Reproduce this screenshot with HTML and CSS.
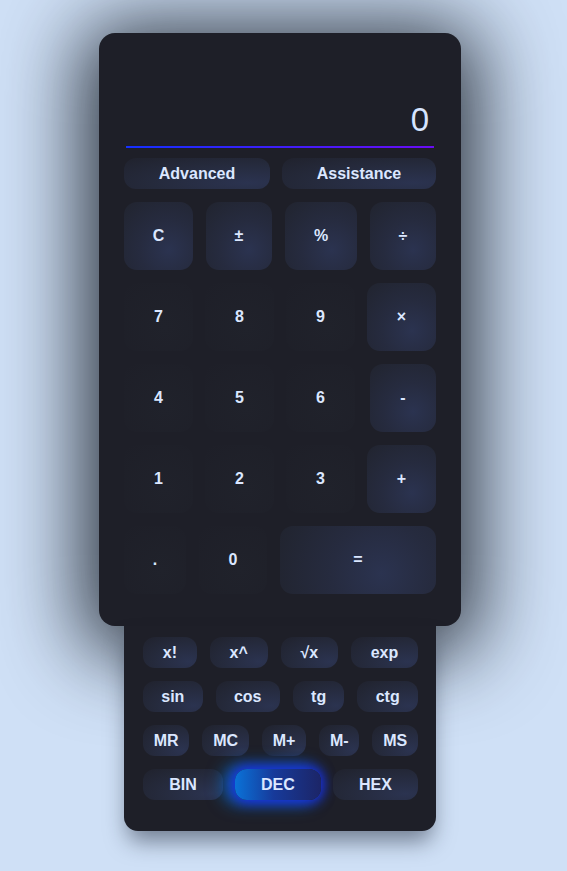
FILE: index.html
```html
<!DOCTYPE html>
<html lang="en">
<head>
<meta charset="utf-8">
<title>Calculator</title>
<link rel="stylesheet" href="styles.css">
</head>
<body>
<div class="wrap">
  <div class="calc">
    <div class="display"><span class="value">0</span></div>
    <div class="modes">
      <button class="pill">Advanced</button>
      <button class="pill">Assistance</button>
    </div>
    <div class="keys">
      <button class="key op">C</button>
      <button class="key op k-pm">±</button>
      <button class="key op k-pct">%</button>
      <button class="key op k-div">÷</button>
      <button class="key num">7</button>
      <button class="key num">8</button>
      <button class="key num">9</button>
      <button class="key op">×</button>
      <button class="key num">4</button>
      <button class="key num">5</button>
      <button class="key num">6</button>
      <button class="key op k-div">-</button>
      <button class="key num">1</button>
      <button class="key num">2</button>
      <button class="key num">3</button>
      <button class="key op">+</button>
      <div class="lastrow">
        <button class="key num">.</button>
        <button class="key num">0</button>
        <button class="key op">=</button>
      </div>
    </div>
  </div>
  <div class="panel">
    <div class="prow">
      <button class="pill small">x!</button>
      <button class="pill small">x^</button>
      <button class="pill small">√x</button>
      <button class="pill small">exp</button>
    </div>
    <div class="prow">
      <button class="pill small">sin</button>
      <button class="pill small">cos</button>
      <button class="pill small">tg</button>
      <button class="pill small">ctg</button>
    </div>
    <div class="prow">
      <button class="pill small">MR</button>
      <button class="pill small">MC</button>
      <button class="pill small">M+</button>
      <button class="pill small">M-</button>
      <button class="pill small">MS</button>
    </div>
    <div class="prow base">
      <button class="pill small">BIN</button>
      <button class="pill small active">DEC</button>
      <button class="pill small">HEX</button>
    </div>
  </div>
</div>
</body>
</html>
```
FILE: styles.css
```css
* { box-sizing: border-box; }
html, body { margin: 0; padding: 0; }
body {
  background: #cfe0f6;
  font-family: "Liberation Sans", Arial, sans-serif;
  width: 567px;
  height: 871px;
  overflow: hidden;
}
.wrap {
  width: 362px;
  margin: 33px 0 0 99px;
  display: flex;
  flex-direction: column;
  align-items: center;
}
.calc {
  position: relative;
  z-index: 2;
  width: 362px;
  background: #1e1f28;
  border-radius: 16px;
  padding: 25px 25px 32px;
  box-shadow: 0 10px 80px 18px rgba(8, 12, 20, 0.8);
}
.display {
  height: 90px;
  margin: 0 2px 0 2px;
  display: flex;
  justify-content: flex-end;
  align-items: flex-end;
  padding: 0 5px 10px 0;
  border-bottom: 2px solid transparent;
  border-image: linear-gradient(90deg, #1430ff, #6a0cf5) 1;
}
.value {
  color: #d6e4ff;
  font-size: 33px;
  line-height: 33px;
  font-family: "Liberation Sans", Arial, sans-serif;
}
button {
  font-family: "Liberation Sans", Arial, sans-serif;
  font-weight: bold;
  font-size: 16px;
  color: #dbe7ff;
  border: none;
  padding: 0;
  cursor: pointer;
}
.pill {
  background: radial-gradient(ellipse at 85% 80%, #2b3350 0%, #252a3c 55%, #20222d 100%);
  border-radius: 12px;
  height: 31px;
  flex: 1 1 auto;
}
.modes {
  display: flex;
  gap: 12px;
  margin-top: 10px;
}
.keys {
  margin-top: 13px;
  display: grid;
  grid-template-columns: repeat(4, 1fr);
  grid-auto-rows: 68px;
  column-gap: 12px;
  row-gap: 13px;
}
.key {
  border-radius: 13px;
}
.key.op {
  background: radial-gradient(circle at 65% 70%, #2b3350 0%, #262b3f 45%, #21242f 100%);
}
.key.num {
  background: radial-gradient(circle at 60% 65%, #20222b 0%, #1e1f28 100%);
}
.k-pm { margin: 0 2px 0 1px; }
.k-pct { margin: 0 -2px 0 -1px; }
.k-div { margin-left: 3px; }
.lastrow {
  grid-column: 1 / -1;
  display: grid;
  grid-template-columns: 62px 68px 1fr;
  column-gap: 13px;
}
.panel {
  position: relative;
  z-index: 3;
  width: 312px;
  background: #1e1f28;
  border-radius: 0 0 14px 14px;
  padding: 11px 18px 31px 19px;
  display: flex;
  flex-direction: column;
  gap: 13px;
  box-shadow: 0 14px 22px -4px rgba(20, 28, 45, 0.5);
}
.prow {
  display: flex;
  gap: 13px;
}
.pill.small {
  padding: 0 10px;
}
.prow.base { gap: 10px; }
.pill.active {
  background: linear-gradient(90deg, #0a72d8 0%, #173a9a 45%, #1c2567 100%);
  box-shadow: 0 0 12px 3px rgba(25, 40, 255, 0.8), -8px 0 16px 5px rgba(10, 120, 220, 0.65);
  margin: 0 2px;
}
```
